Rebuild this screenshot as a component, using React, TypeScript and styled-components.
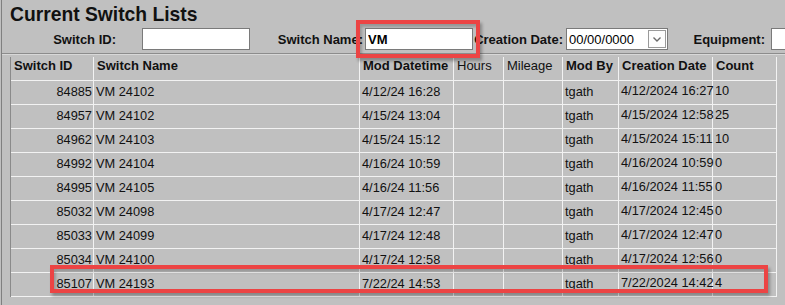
import React from 'react';
import styled, { createGlobalStyle } from 'styled-components';

const Global = createGlobalStyle`
  html, body { margin: 0; padding: 0; background: #c0c0c0; overflow: hidden; }
  body { font-family: "Liberation Sans", Arial, sans-serif; color: #000; }
`;

const Page = styled.div`
  position: relative;
  width: 783px;
  height: 305px;
  margin-left: 1px;
  border-left: 1px solid #808080;
  overflow: hidden;
`;

const Title = styled.h1`
  margin: 0;
  padding: 4px 0 0 8px;
  font-size: 19.3px;
  line-height: 22px;
  font-weight: bold;
  color: #111;
  white-space: nowrap;
`;

const Filters = styled.div`
  display: flex;
  align-items: center;
  height: 22px;
  margin-top: 2px;
  white-space: nowrap;
`;

const Label = styled.label<{ $w: number }>`
  flex: none;
  width: ${p => p.$w}px;
  text-align: right;
  font-size: 13px;
  font-weight: bold;
  color: #111;
`;

const TextBox = styled.input<{ $ml: number; $bold?: boolean }>`
  flex: none;
  box-sizing: border-box;
  width: 108px;
  height: 22px;
  margin: 0 0 0 ${p => p.$ml}px;
  padding: 0 2px;
  border: 1px solid #7a7a7a;
  background: #fff;
  font-family: "Liberation Sans", Arial, sans-serif;
  font-size: 13px;
  font-weight: ${p => (p.$bold ? 'bold' : 'normal')};
  color: #000;
  outline: none;
`;

const Select = styled.div<{ $ml: number }>`
  flex: none;
  box-sizing: border-box;
  display: flex;
  align-items: center;
  justify-content: space-between;
  width: 102px;
  height: 22px;
  margin-left: ${p => p.$ml}px;
  padding: 0 1px 0 2px;
  border: 1px solid #7a7a7a;
  background: #fff;
  font-size: 13px;
  color: #000;
`;

const DropButton = styled.span`
  box-sizing: border-box;
  display: flex;
  align-items: center;
  justify-content: center;
  width: 18px;
  height: 18px;
  border: 1px solid #9a9a9a;
  background: #fdfdfd;
`;

const Separator = styled.div`
  height: 1px;
  margin-top: 3px;
  background: #8c8c8c;
  border-bottom: 1px solid #d8d8d8;
`;

const Grid = styled.div`
  margin: 2px 0 0 8px;
  width: 767px;
  border-left: 1px solid #8a8a8a;
  box-sizing: border-box;
`;

const COLS = '83px 266px 94px 50px 59px 56px 94px 64px';

const Row = styled.div`
  display: grid;
  grid-template-columns: ${COLS};
  height: 24px;
  box-sizing: border-box;
  border-bottom: 1px solid #f2f2f2;
`;

const Cell = styled.div<{ $right?: boolean; $raise?: boolean }>`
  box-sizing: border-box;
  height: 23px;
  border-right: 1px solid #f2f2f2;
  padding: 0 ${p => (p.$right ? '1px' : '0')} 0 ${p => (p.$right ? '0' : '2px')};
  text-align: ${p => (p.$right ? 'right' : 'left')};
  font-size: 12.8px;
  line-height: ${p => (p.$raise ? '19px' : '21px')};
  white-space: nowrap;
  overflow: visible;
  color: #111;
`;

const Head = styled.div<{ $bold?: boolean; $pl?: number }>`
  box-sizing: border-box;
  height: 23px;
  border-right: 1px solid #f2f2f2;
  padding-left: ${p => p.$pl ?? 3}px;
  font-size: 13px;
  line-height: 17px;
  font-weight: ${p => (p.$bold ? 'bold' : 'normal')};
  white-space: nowrap;
  overflow: hidden;
  color: #111;
`;

const Callout = styled.div<{ $x: number; $y: number; $w: number; $h: number }>`
  position: absolute;
  left: ${p => p.$x}px;
  top: ${p => p.$y}px;
  width: ${p => p.$w}px;
  height: ${p => p.$h}px;
  box-sizing: border-box;
  border: 4px solid #ec4444;
  box-shadow: 2px 3px 3px rgba(0, 0, 0, 0.3), inset 2px 3px 3px rgba(0, 0, 0, 0.22);
  pointer-events: none;
`;

type Rec = { id: string; name: string; mod: string; by: string; created: string; count: string };

const rows: Rec[] = [
  { id: '84885', name: 'VM 24102', mod: '4/12/24 16:28', by: 'tgath', created: '4/12/2024 16:27', count: '10' },
  { id: '84957', name: 'VM 24102', mod: '4/15/24 13:04', by: 'tgath', created: '4/15/2024 12:58', count: '25' },
  { id: '84962', name: 'VM 24103', mod: '4/15/24 15:12', by: 'tgath', created: '4/15/2024 15:11', count: '10' },
  { id: '84992', name: 'VM 24104', mod: '4/16/24 10:59', by: 'tgath', created: '4/16/2024 10:59', count: '0' },
  { id: '84995', name: 'VM 24105', mod: '4/16/24 11:56', by: 'tgath', created: '4/16/2024 11:55', count: '0' },
  { id: '85032', name: 'VM 24098', mod: '4/17/24 12:47', by: 'tgath', created: '4/17/2024 12:45', count: '0' },
  { id: '85033', name: 'VM 24099', mod: '4/17/24 12:48', by: 'tgath', created: '4/17/2024 12:47', count: '0' },
  { id: '85034', name: 'VM 24100', mod: '4/17/24 12:58', by: 'tgath', created: '4/17/2024 12:56', count: '0' },
  { id: '85107', name: 'VM 24193', mod: '7/22/24 14:53', by: 'tgath', created: '7/22/2024 14:42', count: '4' },
];

const Chevron = () => (
  <svg width="10" height="7" viewBox="0 0 10 7">
    <path d="M1.5 1.5 L5 5 L8.5 1.5" fill="none" stroke="#6a6a6a" strokeWidth="1.4" />
  </svg>
);

export default function App() {
  return (
    <>
      <Global />
      <Page>
        <Title>Current Switch Lists</Title>
        <Filters>
          <Label $w={114}>Switch ID:</Label>
          <TextBox $ml={26} readOnly value="" />
          <Label $w={113}>Switch Name:</Label>
          <TextBox $ml={2} $bold readOnly value="VM" />
          <Label $w={90}>Creation Date:</Label>
          <Select $ml={3}>
            <span>00/00/0000</span>
            <DropButton>
              <Chevron />
            </DropButton>
          </Select>
          <Label $w={97}>Equipment:</Label>
          <TextBox $ml={6} readOnly value="" />
        </Filters>
        <Separator />
        <Grid>
          <Row>
            <Head $bold $pl={3}>Switch ID</Head>
            <Head $bold>Switch Name</Head>
            <Head $bold>Mod Datetime</Head>
            <Head>Hours</Head>
            <Head>Mileage</Head>
            <Head $bold>Mod By</Head>
            <Head $bold>Creation Date</Head>
            <Head $bold>Count</Head>
          </Row>
          {rows.map(r => (
            <Row key={r.id}>
              <Cell $right>{r.id}</Cell>
              <Cell>{r.name}</Cell>
              <Cell>{r.mod}</Cell>
              <Cell />
              <Cell />
              <Cell>{r.by}</Cell>
              <Cell $raise>{r.created}</Cell>
              <Cell $raise>{r.count}</Cell>
            </Row>
          ))}
        </Grid>
        <Callout $x={354} $y={20} $w={124} $h={38} />
        <Callout $x={48} $y={265} $w={718} $h={28} />
      </Page>
    </>
  );
}
